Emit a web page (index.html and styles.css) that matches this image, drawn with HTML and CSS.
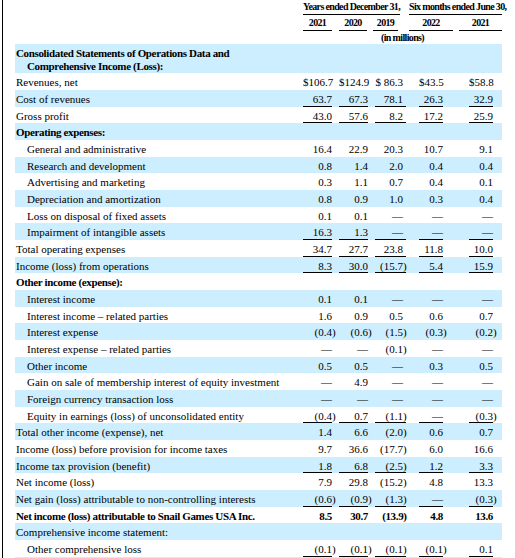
FILE: index.html
```html
<!DOCTYPE html>
<html lang="en">
<head>
    <meta charset="UTF-8">
    <meta name="viewport" content="width=device-width, initial-scale=1.0">
    <title>Consolidated Statements of Operations Data</title>
    <link rel="stylesheet" href="styles.css">
</head>
<body>
    <div class="page">
        <div class="col-heads">
            <div class="head span-years">Years ended December 31,</div>
            <div class="head span-six">Six months ended June 30,</div>
            <div class="head year y1">2021</div>
            <div class="head year y2">2020</div>
            <div class="head year y3">2019</div>
            <div class="head year y4">2022</div>
            <div class="head year y5">2021</div>
            <div class="head unit">(in millions)</div>
        </div>

        <table class="stmt">
            <colgroup>
                <col style="width: 288px">
                <col style="width: 29px">
                <col style="width: 36px">
                <col style="width: 38px">
                <col style="width: 37px">
                <col style="width: 59px">
            </colgroup>
            <tr class="b strong title">
                <td><div class="lbl hang">Consolidated Statements of Operations Data and<br>Comprehensive Income (Loss):</div></td>
                <td></td><td></td><td></td><td></td><td></td>
            </tr>
            <tr>
                <td><div class="lbl">Revenues, net</div></td>
                <td><div class="v">$106.7</div></td>
                <td><div class="v">$124.9</div></td>
                <td><div class="v">$ 86.3</div></td>
                <td><div class="v">$43.5</div></td>
                <td><div class="v">$58.8</div></td>
            </tr>
            <tr class="b ul">
                <td><div class="lbl">Cost of revenues</div></td>
                <td><div class="v">63.7</div></td>
                <td><div class="v">67.3</div></td>
                <td><div class="v">78.1</div></td>
                <td><div class="v">26.3</div></td>
                <td><div class="v">32.9</div></td>
            </tr>
            <tr class="ul">
                <td><div class="lbl">Gross profit</div></td>
                <td><div class="v">43.0</div></td>
                <td><div class="v">57.6</div></td>
                <td><div class="v">8.2</div></td>
                <td><div class="v">17.2</div></td>
                <td><div class="v">25.9</div></td>
            </tr>
            <tr class="b strong">
                <td><div class="lbl">Operating expenses:</div></td>
                <td></td><td></td><td></td><td></td><td></td>
            </tr>
            <tr>
                <td><div class="lbl indent">General and administrative</div></td>
                <td><div class="v">16.4</div></td>
                <td><div class="v">22.9</div></td>
                <td><div class="v">20.3</div></td>
                <td><div class="v">10.7</div></td>
                <td><div class="v">9.1</div></td>
            </tr>
            <tr class="b">
                <td><div class="lbl indent">Research and development</div></td>
                <td><div class="v">0.8</div></td>
                <td><div class="v">1.4</div></td>
                <td><div class="v">2.0</div></td>
                <td><div class="v">0.4</div></td>
                <td><div class="v">0.4</div></td>
            </tr>
            <tr>
                <td><div class="lbl indent">Advertising and marketing</div></td>
                <td><div class="v">0.3</div></td>
                <td><div class="v">1.1</div></td>
                <td><div class="v">0.7</div></td>
                <td><div class="v">0.4</div></td>
                <td><div class="v">0.1</div></td>
            </tr>
            <tr class="b">
                <td><div class="lbl indent">Depreciation and amortization</div></td>
                <td><div class="v">0.8</div></td>
                <td><div class="v">0.9</div></td>
                <td><div class="v">1.0</div></td>
                <td><div class="v">0.3</div></td>
                <td><div class="v">0.4</div></td>
            </tr>
            <tr>
                <td><div class="lbl indent">Loss on disposal of fixed assets</div></td>
                <td><div class="v">0.1</div></td>
                <td><div class="v">0.1</div></td>
                <td><div class="v">&mdash;</div></td>
                <td><div class="v">&mdash;</div></td>
                <td><div class="v">&mdash;</div></td>
            </tr>
            <tr class="b ul">
                <td><div class="lbl indent">Impairment of intangible assets</div></td>
                <td><div class="v">16.3</div></td>
                <td><div class="v">1.3</div></td>
                <td><div class="v">&mdash;</div></td>
                <td><div class="v">&mdash;</div></td>
                <td><div class="v">&mdash;</div></td>
            </tr>
            <tr class="ul">
                <td><div class="lbl">Total operating expenses</div></td>
                <td><div class="v">34.7</div></td>
                <td><div class="v">27.7</div></td>
                <td><div class="v">23.8</div></td>
                <td><div class="v">11.8</div></td>
                <td><div class="v">10.0</div></td>
            </tr>
            <tr class="b ul">
                <td><div class="lbl">Income (loss) from operations</div></td>
                <td><div class="v">8.3</div></td>
                <td><div class="v">30.0</div></td>
                <td><div class="v">(15.7<span class="p">)</span></div></td>
                <td><div class="v">5.4</div></td>
                <td><div class="v">15.9</div></td>
            </tr>
            <tr class="strong">
                <td><div class="lbl">Other income (expense):</div></td>
                <td></td><td></td><td></td><td></td><td></td>
            </tr>
            <tr class="b">
                <td><div class="lbl indent">Interest income</div></td>
                <td><div class="v">0.1</div></td>
                <td><div class="v">0.1</div></td>
                <td><div class="v">&mdash;</div></td>
                <td><div class="v">&mdash;</div></td>
                <td><div class="v">&mdash;</div></td>
            </tr>
            <tr>
                <td><div class="lbl indent">Interest income &ndash; related parties</div></td>
                <td><div class="v">1.6</div></td>
                <td><div class="v">0.9</div></td>
                <td><div class="v">0.5</div></td>
                <td><div class="v">0.6</div></td>
                <td><div class="v">0.7</div></td>
            </tr>
            <tr class="b">
                <td><div class="lbl indent">Interest expense</div></td>
                <td><div class="v">(0.4<span class="p">)</span></div></td>
                <td><div class="v">(0.6<span class="p">)</span></div></td>
                <td><div class="v">(1.5<span class="p">)</span></div></td>
                <td><div class="v">(0.3<span class="p">)</span></div></td>
                <td><div class="v">(0.2<span class="p">)</span></div></td>
            </tr>
            <tr>
                <td><div class="lbl indent">Interest expense &ndash; related parties</div></td>
                <td><div class="v">&mdash;</div></td>
                <td><div class="v">&mdash;</div></td>
                <td><div class="v">(0.1<span class="p">)</span></div></td>
                <td><div class="v">&mdash;</div></td>
                <td><div class="v">&mdash;</div></td>
            </tr>
            <tr class="b">
                <td><div class="lbl indent">Other income</div></td>
                <td><div class="v">0.5</div></td>
                <td><div class="v">0.5</div></td>
                <td><div class="v">&mdash;</div></td>
                <td><div class="v">0.3</div></td>
                <td><div class="v">0.5</div></td>
            </tr>
            <tr>
                <td><div class="lbl indent">Gain on sale of membership interest of equity investment</div></td>
                <td><div class="v">&mdash;</div></td>
                <td><div class="v">4.9</div></td>
                <td><div class="v">&mdash;</div></td>
                <td><div class="v">&mdash;</div></td>
                <td><div class="v">&mdash;</div></td>
            </tr>
            <tr class="b">
                <td><div class="lbl indent">Foreign currency transaction loss</div></td>
                <td><div class="v">&mdash;</div></td>
                <td><div class="v">&mdash;</div></td>
                <td><div class="v">&mdash;</div></td>
                <td><div class="v">&mdash;</div></td>
                <td><div class="v">&mdash;</div></td>
            </tr>
            <tr class="ul">
                <td><div class="lbl indent">Equity in earnings (loss) of unconsolidated entity</div></td>
                <td><div class="v">(0.4<span class="p">)</span></div></td>
                <td><div class="v">0.7</div></td>
                <td><div class="v">(1.1<span class="p">)</span></div></td>
                <td><div class="v">&mdash;</div></td>
                <td><div class="v">(0.3<span class="p">)</span></div></td>
            </tr>
            <tr class="b">
                <td><div class="lbl">Total other income (expense), net</div></td>
                <td><div class="v">1.4</div></td>
                <td><div class="v">6.6</div></td>
                <td><div class="v">(2.0<span class="p">)</span></div></td>
                <td><div class="v">0.6</div></td>
                <td><div class="v">0.7</div></td>
            </tr>
            <tr>
                <td><div class="lbl">Income (loss) before provision for income taxes</div></td>
                <td><div class="v">9.7</div></td>
                <td><div class="v">36.6</div></td>
                <td><div class="v">(17.7<span class="p">)</span></div></td>
                <td><div class="v">6.0</div></td>
                <td><div class="v">16.6</div></td>
            </tr>
            <tr class="b ul">
                <td><div class="lbl">Income tax provision (benefit)</div></td>
                <td><div class="v">1.8</div></td>
                <td><div class="v">6.8</div></td>
                <td><div class="v">(2.5<span class="p">)</span></div></td>
                <td><div class="v">1.2</div></td>
                <td><div class="v">3.3</div></td>
            </tr>
            <tr>
                <td><div class="lbl">Net income (loss)</div></td>
                <td><div class="v">7.9</div></td>
                <td><div class="v">29.8</div></td>
                <td><div class="v">(15.2<span class="p">)</span></div></td>
                <td><div class="v">4.8</div></td>
                <td><div class="v">13.3</div></td>
            </tr>
            <tr class="b ul">
                <td><div class="lbl">Net gain (loss) attributable to non-controlling interests</div></td>
                <td><div class="v">(0.6<span class="p">)</span></div></td>
                <td><div class="v">(0.9<span class="p">)</span></div></td>
                <td><div class="v">(1.3<span class="p">)</span></div></td>
                <td><div class="v">&mdash;</div></td>
                <td><div class="v">(0.3<span class="p">)</span></div></td>
            </tr>
            <tr class="strong">
                <td><div class="lbl">Net income (loss) attributable to Snail Games USA Inc.</div></td>
                <td><div class="v">8.5</div></td>
                <td><div class="v">30.7</div></td>
                <td><div class="v">(13.9<span class="p">)</span></div></td>
                <td><div class="v">4.8</div></td>
                <td><div class="v">13.6</div></td>
            </tr>
            <tr class="b">
                <td><div class="lbl">Comprehensive income statement:</div></td>
                <td></td><td></td><td></td><td></td><td></td>
            </tr>
            <tr class="ul">
                <td><div class="lbl indent">Other comprehensive loss</div></td>
                <td><div class="v">(0.1<span class="p">)</span></div></td>
                <td><div class="v">(0.1<span class="p">)</span></div></td>
                <td><div class="v">(0.1<span class="p">)</span></div></td>
                <td><div class="v">(0.1<span class="p">)</span></div></td>
                <td><div class="v">0.1</div></td>
            </tr>
            <tr class="b">
                <td><div class="lbl">&nbsp;</div></td>
                <td></td><td></td><td></td><td></td><td></td>
            </tr>
        </table>
    </div>
</body>
</html>
```

FILE: styles.css
```css
body {
    margin: 0;
    font-family: "Liberation Serif", "Times New Roman", serif;
    color: #000000;
    background-color: #ffffff;
}

.page {
    margin-left: 2px;
    padding-left: 12px;
    border-left: 1px solid #000000;
    min-height: 100vh;
    box-sizing: border-box;
    overflow: hidden;
}

/* column headings */
.col-heads {
    display: grid;
    grid-template-columns: 29px 7px 28px 6px 25px 2px 9px 44px 6px 43px;
    width: 199px;
    margin-left: 288px;
    font-size: 10px;
    font-weight: bold;
    letter-spacing: -0.65px;
}

.head {
    text-align: center;
    white-space: nowrap;
}

.span-years,
.span-six {
    grid-row: 1;
    line-height: 14px;
    border-bottom: 1px solid #000000;
}

.span-years {
    grid-column: 1 / 7;
}

.span-six {
    grid-column: 8 / 11;
}

.year {
    grid-row: 2;
    padding-top: 1px;
    line-height: 14px;
    border-bottom: 1px solid #000000;
}

.y1 { grid-column: 1; }
.y2 { grid-column: 3; }
.y3 { grid-column: 5; }
.y4 { grid-column: 8; }
.y5 { grid-column: 10; }

.unit {
    grid-row: 3;
    grid-column: 1 / 11;
    line-height: 13px;
}

/* statement table */
.stmt {
    width: 487px;
    table-layout: fixed;
    border-collapse: collapse;
    font-size: 11px;
}

.stmt td {
    padding: 0;
    vertical-align: bottom;
}

.stmt tr.b {
    background-color: #cceeff;
}

.lbl,
.v {
    padding-top: 3px;
    line-height: 13.67px;
    white-space: nowrap;
}

.lbl {
    padding-left: 1px;
}

.lbl.indent {
    padding-left: 12px;
}

.title .lbl {
    padding-top: 3px;
    padding-bottom: 1.3px;
    line-height: 12.5px;
}

.lbl.hang {
    padding-left: 12px;
    text-indent: -11px;
}

.v {
    text-align: right;
}

.stmt td:nth-child(3) { padding-left: 7px; }
.stmt td:nth-child(4) { padding-left: 7px; }
.stmt td:nth-child(5) { padding-left: 13px; }
.stmt td:nth-child(6) { padding-left: 26px; padding-right: 9px; }

.stmt td:nth-child(4) .v {
    padding-right: 3px;
}

/* closing bracket hangs past the figure column */
.p {
    margin-right: -0.333em;
}

.ul .v {
    box-shadow: inset 0 -1px 0 #000000;
}

.strong td {
    font-weight: bold;
    letter-spacing: -0.35px;
}
```
